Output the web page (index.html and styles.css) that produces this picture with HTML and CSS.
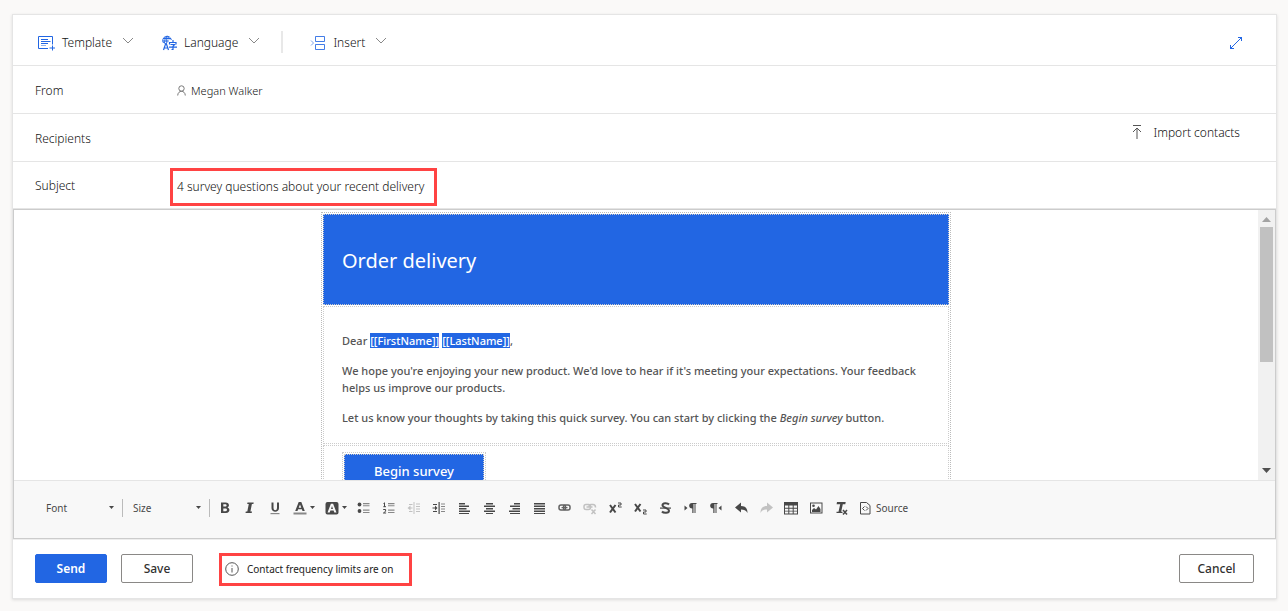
FILE: index.html
```html
<!DOCTYPE html>
<html lang="en">
<head>
<meta charset="utf-8">
<title>Send survey email</title>
<link rel="stylesheet" href="styles.css">
</head>
<body>
<main class="card">
  <header class="commands">
    <button class="command" type="button">
      <svg width="17" height="16" viewBox="0 0 17 16" fill="none" stroke="#2266e3"><path d="M10 13.500H.5V1.500h14v8"/><path d="M3 4.500h7M3 6.500h9.500M3 8.500h7M14.500 10.500v5M11.500 13h5.500"/><path d="M3 10.500h5" stroke-opacity=".5"/></svg>
      <span>Template</span>
      <svg class="chevron" width="12" height="7" viewBox="0 0 12 7"><path d="M1 1l5 5 5-5"/></svg>
    </button>
    <button class="command language" type="button">
      <svg width="15" height="16" viewBox="0 0 15 16" fill="none" stroke="#2266e3"><path d="M1.500 8A4.300 4.300 0 1 1 9.300 5M2.500 8.500C2.800 0 6.300 0 7 4.500M4.800 1v7M1 3.500h8M.8 6h6"/><path d="M1.500 15l2.200-6.500h.6L6.500 15M2.500 13h3" stroke-width="1.200"/><path d="M11 5v2.500M7.500 9.500v-2h6.500v2M8.500 9.500h4L11 11.300V14.500H9.500M7 12.200h8" stroke-width="1.200"/></svg>
      <span>Language</span>
      <svg class="chevron" width="12" height="7" viewBox="0 0 12 7"><path d="M1 1l5 5 5-5"/></svg>
    </button>
    <span class="divider"></span>
    <button class="command" type="button">
      <svg width="16" height="16" viewBox="0 0 16 16" fill="none" stroke="#2266e3"><path d="M5.500 1.500h9v5h-9zM5.500 9.500h9v5h-9z" stroke-opacity=".85"/><path d="M1 5.500l2.500 2.500L1 10.500" stroke="#7ba3ef"/></svg>
      <span>Insert</span>
      <svg class="chevron" width="12" height="7" viewBox="0 0 12 7"><path d="M1 1l5 5 5-5"/></svg>
    </button>
    <button class="expand" type="button" aria-label="Expand">
      <svg width="14" height="14" viewBox="0 0 14 14" fill="none" stroke="#2266e3"><path d="M1 13L13 1M9 1.500h3.500V5M1.500 9v3.500H5"/></svg>
    </button>
  </header>

  <div class="row">
    <span class="label">From</span>
    <span class="sender">
      <svg width="9" height="11" viewBox="0 0 9 11" fill="none" stroke="#777"><circle cx="4.500" cy="3.500" r="2.700"/><path d="M.7 10.500C.9 4.900 8.100 4.900 8.300 10.500"/></svg>
      Megan Walker
    </span>
  </div>
  <div class="row">
    <label class="label" for="recipients">Recipients</label>
    <input class="field" id="recipients" type="text">
    <button class="import" type="button">
      <svg width="10" height="15" viewBox="0 0 10 15" fill="none" stroke="#555"><path d="M1 .5h8M5 14V3M1 7l4-4 4 4"/></svg>
      <span>Import contacts</span>
    </button>
  </div>
  <div class="row subject-row">
    <label class="label" for="subject">Subject</label>
    <input class="field subject" id="subject" type="text" value="4 survey questions about your recent delivery">
  </div>

  <section class="editor">
    <div class="canvas">
      <div class="page">
        <article class="email">
          <div class="cell banner"><h1>Order delivery</h1></div>
          <div class="cell message">
            <p>Dear <mark>[[FirstName]]</mark> <mark>[[LastName]]</mark>,</p>
            <p>We hope you're enjoying your new product. We'd love to hear if it's meeting your expectations. Your feedback<br>helps us improve our products.</p>
            <p>Let us know your thoughts by taking this quick survey. You can start by clicking the <em>Begin survey</em> button.</p>
          </div>
          <div class="cell action"><span class="frame"><a class="begin" href="#">Begin survey</a></span></div>
        </article>
      </div>
      <div class="scrollbar">
        <svg width="9" height="5" viewBox="0 0 9 5"><path d="M0 5L4.500 0 9 5z" fill="#a3a3a3"/></svg>
        <div class="track"><div class="thumb"></div></div>
        <svg width="9" height="5" viewBox="0 0 9 5"><path d="M0 0l4.500 5L9 0z" fill="#505050"/></svg>
      </div>
    </div>

    <div class="tools">
      <span class="combo"><select aria-label="Font"><option>Font</option></select><svg class="caret" width="5" height="3" viewBox="0 0 5 3"><path d="M0 0h5L2.500 3z"/></svg></span>
      <span class="combo"><select aria-label="Size"><option>Size</option></select><svg class="caret" width="5" height="3" viewBox="0 0 5 3"><path d="M0 0h5L2.500 3z"/></svg></span>
      <div class="group">
        <button class="tool" type="button" aria-label="Bold"><svg viewBox="0 0 16 16"><path fill-rule="evenodd" d="M4 2.500h4.500c4 0 4.300 3.800 2 4.900C13.500 8.500 13 13 9 13H4zM6.300 4.300v2.300h2c1.700 0 1.700-2.300 0-2.300zM6.300 8.400v2.800h2.200c2 0 2-2.800 0-2.800z"/></svg></button>
        <button class="tool" type="button" aria-label="Italic"><svg viewBox="0 0 16 16"><path d="M5.500 2.500h6.200l-.3 1.600H9.900L8.400 11.400h1.600L9.700 13H3.500l.3-1.600h1.500L6.800 4.100H5.200z"/></svg></button>
        <button class="tool" type="button" aria-label="Underline"><svg viewBox="0 0 16 16"><path d="M4.500 2.500h2V8c0 3 3.500 3 3.500 0V2.500h2V8c0 5-7.500 5-7.500 0z"/><path class="soft" d="M3.500 13h9v1.200h-9z"/></svg></button>
        <button class="tool wide" type="button" aria-label="Text color"><svg viewBox="0 0 16 16"><path fill-rule="evenodd" d="M6.700 2h2.600l3.500 9h-2.300l-.6-1.800H6.100L5.500 11H3.200zM8 4.500L6.700 7.700h2.600z"/><path class="soft" d="M1.500 12.500h13v2h-13z"/></svg><svg class="caret" width="5" height="3" viewBox="0 0 5 3"><path d="M0 0h5L2.500 3z"/></svg></button>
        <button class="tool wide" type="button" aria-label="Background color"><svg viewBox="0 0 16 16"><path fill-rule="evenodd" d="M3.500 2h9q2 0 2 2v8.500q0 2-2 2h-9q-2 0-2-2V4q0-2 2-2zM6.900 3.800L3.500 12.500h2.200l.7-2h3.200l.7 2h2.200L9.100 3.800zM8 6l1 2.900H7z"/></svg><svg class="caret" width="5" height="3" viewBox="0 0 5 3"><path d="M0 0h5L2.500 3z"/></svg></button>
        <button class="tool" type="button" aria-label="Bulleted list"><svg viewBox="0 0 16 16"><circle cx="3.500" cy="4.500" r="1.900"/><circle cx="3.500" cy="11" r="1.900"/><path class="soft" d="M7 3h6.500v1.200H7zM7 5.300h6.500v1H7zM7 9.500h6.500v1.200H7zM7 12h6.500v1H7z"/></svg></button>
        <button class="tool" type="button" aria-label="Numbered list"><svg viewBox="0 0 16 16"><path class="line" d="M2.500 3.500l1-.7v4M2.300 6.700H5M2.200 9.500h2.400v1.800L2.400 13h2.700"/><path class="soft" d="M7 3h6.500v1.200H7zM7 5.300h6.500v1H7zM7 9.500h6.500v1.200H7zM7 12h6.500v1H7z"/></svg></button>
        <button class="tool" type="button" aria-label="Decrease indent" disabled><svg viewBox="0 0 16 16"><path d="M7.500 2h1v12h-1zM10 3.500h4v1h-4zM10 6h4v1h-4zM10 8.500h4v1h-4zM10 11h4v1h-4zM3 4h3.500v1H3zM3 11h3.500v1H3zM1.500 8l3-2.500v2h2v1h-2v2z"/></svg></button>
        <button class="tool" type="button" aria-label="Increase indent"><svg viewBox="0 0 16 16"><path d="M7.500 2h1.200v12H7.500zM6.500 8L4 5.500v2H1.500v1H4v2zM2 4h4v1H2zM2 11h4v1H2z"/><path class="soft" d="M10 3.500h4v1h-4zM10 6h4v1h-4zM10 8.500h4v1h-4zM10 11h4v1h-4z"/></svg></button>
      </div>
      <div class="group">
        <button class="tool" type="button" aria-label="Align left"><svg viewBox="0 0 16 16"><path d="M2 3h6v1.600H2zM2 5.500h10v1.600H2zM2 8h7.500v1.600H2zM2 10.500h11v1.600H2zM2 13h10v1H2z"/></svg></button>
        <button class="tool" type="button" aria-label="Center"><svg viewBox="0 0 16 16"><path d="M4 3h7v1.600H4zM2 5.500h11v1.600H2zM4 8h7v1.600H4zM2 10.500h11v1.600H2zM4 13h7v1H4z"/></svg></button>
        <button class="tool" type="button" aria-label="Align right"><svg viewBox="0 0 16 16"><path d="M7 3h6v1.600H7zM3 5.500h10v1.600H3zM5.500 8H13v1.600H5.500zM2 10.500h11v1.600H2zM3 13h10v1H3z"/></svg></button>
        <button class="tool" type="button" aria-label="Justify"><svg viewBox="0 0 16 16"><path d="M2 3h11v1.600H2zM2 5.500h11v1.600H2zM2 8h11v1.600H2zM2 10.500h11v1.600H2zM2 13h11v1H2z"/></svg></button>
      </div>
      <div class="group">
        <button class="tool" type="button" aria-label="Link"><svg viewBox="0 0 16 16"><g opacity=".85"><rect class="line thick" x="1" y="5" width="6.500" height="5" rx="2"/><rect class="line thick" x="5.500" y="5" width="6.500" height="5" rx="2"/><path d="M3.500 7h6v1.200h-6z"/></g></svg></button>
        <button class="tool" type="button" aria-label="Unlink" disabled><svg viewBox="0 0 16 16"><rect class="line thick" x="1" y="4.500" width="6.500" height="5" rx="2"/><path class="line thick" d="M6 7q0-2.500 2-2.500h2q2.500 0 2.500 3M3.500 7h6M8.500 9.500l4 4.500M12.500 9.500l-4 4.500"/></svg></button>
        <button class="tool" type="button" aria-label="Superscript"><svg viewBox="0 0 16 16"><path class="line bold" d="M2 5l5.500 7.500M7.500 5L2 12.500"/><path class="line" d="M10 3h3v2h-2.500v2h3.200"/></svg></button>
        <button class="tool" type="button" aria-label="Subscript"><svg viewBox="0 0 16 16"><path class="line bold" d="M2 4l5.500 7.500M7.500 4L2 11.500"/><path class="line" d="M10 10h3v2h-2.500v2h3.200"/></svg></button>
        <button class="tool" type="button" aria-label="Strikethrough"><svg viewBox="0 0 16 16"><path class="line bold" d="M11 4.500C9.500 2.700 4.500 2.700 4.500 5.300S11 8 11 10.700 5.500 13.300 4 11.500"/><path d="M2 7.500h11v1.200H2z"/></svg></button>
        <button class="tool" type="button" aria-label="Left to right"><svg viewBox="0 0 16 16"><path d="M1.500 5.500l3 2.500-3 2.500zM9 3h4.500v1h-1v9h-1V4h-1v9H9.300V8.500C5 8.500 5.300 3 9 3z"/></svg></button>
        <button class="tool" type="button" aria-label="Right to left"><svg viewBox="0 0 16 16"><path d="M13.500 5.500l-3 2.500 3 2.500zM5 3h4.500v1h-1v9h-1V4h-1v9H5.300V8.500C1 8.500 1.300 3 5 3z"/></svg></button>
      </div>
      <div class="group">
        <button class="tool" type="button" aria-label="Undo"><svg viewBox="0 0 16 16"><path d="M1 7.500l6-5V6c3.500 0 6.500 1.500 6.500 7-1.500-3-3.500-3.500-6.500-3.500v3z"/></svg></button>
        <button class="tool" type="button" aria-label="Redo" disabled><svg viewBox="0 0 16 16"><path d="M14 7.500l-6-5V6c-3.500 0-6.500 1.500-6.500 7C3 10 5 9.500 8 9.500v3z"/></svg></button>
        <button class="tool" type="button" aria-label="Table"><svg viewBox="0 0 16 16"><path fill-rule="evenodd" d="M0 2h14v12.500H0zM1 5.500v2.300h3.300V5.500zM5.300 5.500v2.300h3.400V5.500zM9.700 5.500v2.300H13V5.500zM1 8.800v2h3.300v-2zM5.300 8.800v2h3.400v-2zM9.700 8.800v2H13v-2zM1 11.600v1.900h3.300v-1.900zM5.300 11.600v1.900h3.400v-1.900zM9.700 11.600v1.900H13v-1.900z"/></svg></button>
        <button class="tool" type="button" aria-label="Image"><svg viewBox="0 0 16 16"><path fill-rule="evenodd" d="M1 2.500h12.500v11H1zM2 3.500v9h10.500v-9z"/><circle cx="4.500" cy="5.700" r="1.300"/><path d="M3 12V10l2-2 2 1.500L9.500 6l2 3v3z"/></svg></button>
        <button class="tool" type="button" aria-label="Remove format"><svg viewBox="0 0 16 16"><path d="M3 2h8.700l-.4 2.300H8.800L7.200 11.700H8.500V13h-6v-1.300h2L6.200 4.300H2.600z"/><path class="line thick" d="M9 10l4 4.500M13 10l-4 4.500"/></svg></button>
        <button class="tool source" type="button"><svg viewBox="0 0 16 16"><path class="line" d="M2.500 2.500h6l3.500 3v8.500H2.500zM6.500 6.500L4.500 8.500l2 2M8 6.500l2 2-2 2"/></svg>Source</button>
      </div>
    </div>
  </section>

  <footer class="footer">
    <button class="button primary" type="button">Send</button>
    <button class="button" type="button">Save</button>
    <span class="notice">
      <svg width="14" height="14" viewBox="0 0 14 14" fill="none" stroke="#555"><circle cx="7" cy="7" r="6.300"/><path d="M7 6v4.500M7 3.500v1"/></svg>
      Contact frequency limits are on
    </span>
    <button class="button cancel" type="button">Cancel</button>
  </footer>
</main>
</body>
</html>
```
FILE: styles.css
```css
* { box-sizing: border-box; }

body {
  margin: 0;
  background: #faf9f8;
  color: #111;
  font: 300 12px/16px "Noto Sans", sans-serif;
}

button, input, select {
  font: inherit;
  color: inherit;
  border: 0;
  padding: 0;
  background: none;
}

svg { flex: none; }

.card {
  display: flex;
  flex-direction: column;
  height: calc(100vh - 26px);
  margin: 14px 11px 12px 12px;
  background: #fff;
  border: 1px solid #e5e5e5;
  box-shadow: 0 1px 3px rgba(0, 0, 0, 0.12);
}

.commands {
  display: flex;
  align-items: center;
  height: 51px;
  padding: 5px 33px 0 25px;
  border-bottom: 1px solid #e5e5e5;
}

.command { display: flex; align-items: center; gap: 7px; }
.command .chevron { margin: 0 0 4px 3px; fill: none; stroke: #888; }
.language { margin-left: 28px; }
.divider { width: 2px; height: 22px; margin: 0 27px 2px 21px; background: #e8e8e8; }
.expand { display: flex; margin-left: auto; }

.row {
  display: flex;
  align-items: center;
  height: 48px;
  padding: 2px 36px 0 22px;
  border-bottom: 1px solid #e5e5e5;
}
.subject-row { height: 47px; padding-top: 3px; }
.subject-row .label { padding-bottom: 2px; }
.label { width: 135px; }
.sender { display: flex; align-items: center; gap: 5px; padding-left: 7px; font-size: 11px; }
.field { flex: 1; min-width: 0; height: 38px; outline: 0; }
.subject { flex: 0 0 267px; padding: 0 4px; border: 3px solid #ff4343; }
.import { display: flex; align-items: center; gap: 11px; padding-bottom: 12px; }

.editor {
  display: flex;
  flex: 1;
  flex-direction: column;
  min-height: 0;
  border: 1px solid #ccc;
}
.canvas { display: flex; flex: 1; min-height: 0; }
.page { flex: 1; overflow: hidden; padding-top: 2px; }

.email {
  display: grid;
  gap: 1px;
  max-width: 630px;
  margin: 0 auto;
  padding: 1px;
  border: 1px dotted #bbb;
  font-size: 11px;
  font-weight: 500;
  line-height: 17px;
  color: #555;
}
.cell { padding: 0 18px; border: 1px dotted #ccc; }
.banner { padding: 31px 18px 29px; background: #2266e3; color: #fff; }
.banner h1 { margin: 0; font-size: 20px; font-weight: 400; line-height: 29px; }
.message { padding: 25px 18px 17px; }
.message p { margin: 0 0 13px; }
.message p:last-child { margin: 0; }
mark { background: #2266e3; color: #fff; }
.action { padding: 6px 18px 20px; }
.frame { display: inline-block; padding: 1px; border: 1px dotted #ccc; }
.begin {
  display: block;
  padding: 7px 29px;
  border: 1px dotted #ccc;
  background: #2266e3;
  color: #fff;
  font-size: 13px;
  line-height: 18px;
  text-decoration: none;
}

.scrollbar {
  display: flex;
  flex-direction: column;
  align-items: center;
  gap: 5px;
  width: 17px;
  padding: 7px 0;
  background: #f1f1f1;
}
.track { flex: 1; width: 13px; }
.thumb { height: 57%; background: #c1c1c1; }

.tools {
  display: flex;
  align-items: center;
  height: 58px;
  padding: 0 24px 4px 22px;
  border-top: 1px solid #e5e5e5;
  background: #f8f8f8;
  color: #484848;
  font-size: 10px;
  font-weight: 400;
}
.combo {
  display: flex;
  align-items: center;
  width: 87px;
  height: 18px;
  padding: 0 8px 0 10px;
  border-right: 1px solid #bbb;
}
.combo select { flex: 1; min-width: 0; appearance: none; }
.group { display: flex; margin-right: 1px; }
.combo + .group { margin-left: 2px; }
.tool { display: flex; align-items: center; justify-content: center; width: 25px; height: 24px; }
.tool svg { width: 16px; height: 16px; fill: #484848; }
.tool .soft { fill: #888; }
.tool .line { fill: none; stroke: #484848; }
.tool .thick { stroke-width: 1.5px; }
.tool .bold { stroke-width: 2px; }
.tool:disabled { opacity: 0.3; }
.caret, .tool .caret { width: 5px; height: 3px; fill: #484848; }
.wide { width: 32px; gap: 2px; }
.source { width: auto; gap: 2px; margin-left: 4px; }

.footer {
  display: flex;
  align-items: center;
  height: 59px;
  padding: 0 22px;
  border-top: 1px solid #eee;
}
.button {
  width: 72px;
  height: 29px;
  margin: 0 14px 2px 0;
  padding-top: 2px;
  border: 1px solid #8a8886;
  border-radius: 2px;
  background: #fff;
  color: #323130;
  font-weight: 500;
}
.primary { border-color: #2266e3; background: #2266e3; color: #fff; font-weight: 600; }
.cancel { width: 75px; margin: 0 0 2px auto; }
.notice {
  display: flex;
  align-items: center;
  gap: 8px;
  height: 33px;
  margin-left: 12px;
  padding: 0 15px 0 3px;
  border: 3px solid #ff4343;
  color: #222;
  font-size: 10px;
  font-weight: 400;
}
```
